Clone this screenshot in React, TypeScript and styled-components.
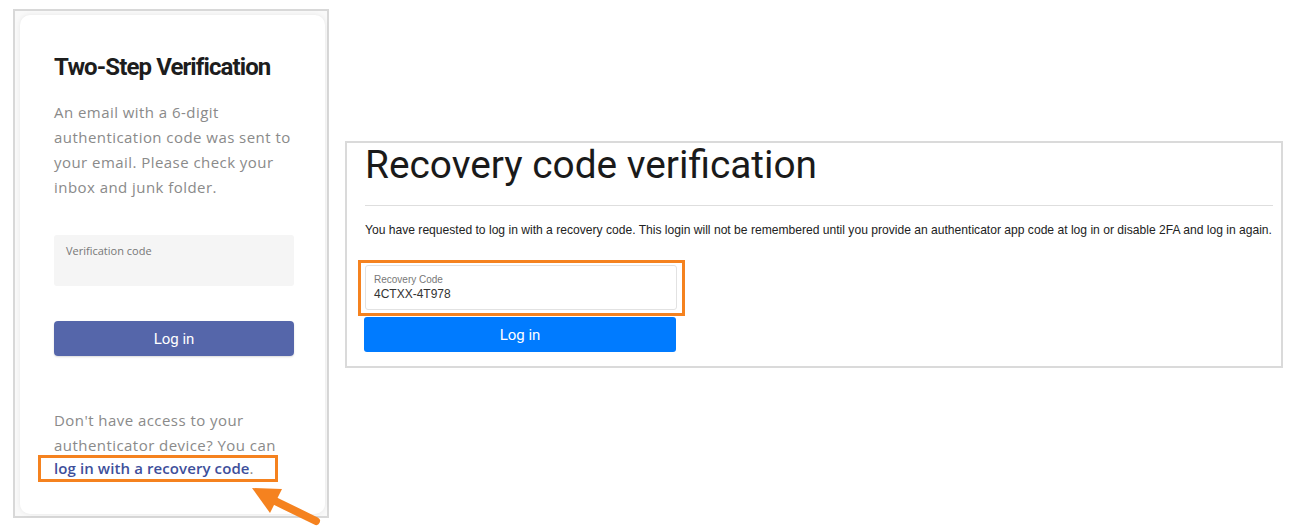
import styled, { createGlobalStyle } from "styled-components";

const GlobalStyle = createGlobalStyle`
  html, body {
    margin: 0;
    padding: 0;
    background: #ffffff;
  }
  body {
    width: 1294px;
    height: 527px;
    overflow: hidden;
  }
`;

const Page = styled.div`
  position: relative;
  display: flex;
  align-items: flex-start;
  width: 1294px;
  height: 527px;
  padding: 9px 0 0 13px;
  box-sizing: border-box;
`;

const Frame = styled.div`
  display: flex;
  width: 316px;
  height: 509px;
  box-sizing: border-box;
  border: 2px solid #d8d8d8;
  background: #f9f9f9;
  padding: 4px 2px 2px 5px;
`;

const Card = styled.div`
  flex: 1;
  background: #ffffff;
  border-radius: 10px;
  box-shadow: 0 0 5px rgba(0, 0, 0, 0.08);
  padding: 36px 28px 0 34px;
  box-sizing: border-box;
`;

const CardTitle = styled.h1`
  margin: 0;
  font-family: "Roboto", "Liberation Sans", sans-serif;
  font-weight: 700;
  font-size: 24px;
  line-height: 32px;
  letter-spacing: -0.9px;
  color: #1d1d1d;
`;

const CardText = styled.p<{ $top: number }>`
  margin: ${({ $top }) => $top}px 0 0;
  font-family: "Open Sans", "Liberation Sans", sans-serif;
  font-size: 15px;
  letter-spacing: 0.45px;
  line-height: 25px;
  color: #8a8a8a;
`;

const CodeField = styled.div`
  margin-top: 35px;
  width: 240px;
  height: 51px;
  background: #f5f5f5;
  border-radius: 3px;
  padding: 8px 12px;
  box-sizing: border-box;
  font-family: "Open Sans", "Liberation Sans", sans-serif;
  font-size: 11px;
  color: #777777;
`;

const PrimaryButton = styled.button<{ $bg: string; $radius: number }>`
  display: block;
  width: 100%;
  height: 35px;
  border: none;
  border-radius: ${({ $radius }) => $radius}px;
  background: ${({ $bg }) => $bg};
  color: #ffffff;
  font-family: "Roboto", "Liberation Sans", sans-serif;
  font-size: 15px;
  padding: 0;
`;

const LeftButtonWrap = styled.div`
  margin-top: 35px;
  width: 240px;
  border-radius: 4px;
  box-shadow: 0 1px 2px rgba(0, 0, 0, 0.15);
`;

const Highlight = styled.div`
  width: 240px;
  height: 27px;
  box-sizing: border-box;
  margin: -3px 0 0 -16px;
  border: 3px solid #f5821f;
  padding-left: 13px;
  font-family: "Open Sans", "Liberation Sans", sans-serif;
  font-size: 15px;
  letter-spacing: 0.45px;
  line-height: 21px;
  color: #8a8a8a;
  white-space: nowrap;
`;

const RecoveryLink = styled.a`
  color: #3e4f9b;
  font-weight: 600;
  letter-spacing: 0.1px;
  text-decoration: none;
`;

const Panel = styled.div`
  margin: 132px 0 0 16px;
  width: 938px;
  height: 227px;
  box-sizing: border-box;
  border: 2px solid #dadada;
  padding: 0 8px 0 18px;
  font-family: "Liberation Sans", Arial, sans-serif;
`;

const PanelTitle = styled.h2`
  margin: 0;
  font-family: "Roboto", "Liberation Sans", sans-serif;
  font-weight: 400;
  font-size: 38.8px;
  line-height: 44px;
  color: #1a1a1a;
`;

const Rule = styled.hr`
  margin: 18px 0 0;
  border: none;
  border-top: 1px solid #dedede;
`;

const PanelText = styled.p`
  margin: 16px 0 0;
  font-size: 12.1px;
  line-height: 16px;
  color: #222222;
  white-space: nowrap;
`;

const FieldHighlight = styled.div`
  margin: 22px 0 0 -7px;
  width: 327px;
  box-sizing: border-box;
  border: 3px solid #f5821f;
  padding: 2px 5px 3px 4px;
`;

const RecoveryField = styled.div`
  height: 45px;
  box-sizing: border-box;
  border: 1px solid #e2e2e2;
  border-radius: 3px;
  padding: 7px 8px 0;
`;

const FieldLabel = styled.div`
  font-size: 10px;
  line-height: 13px;
  color: #777777;
`;

const FieldValue = styled.div`
  font-size: 12px;
  line-height: 16px;
  color: #333333;
`;

const RightButtonWrap = styled.div`
  margin: 1px 0 0 -1px;
  width: 312px;
`;

const Arrow = styled.svg`
  position: absolute;
  left: 245px;
  top: 480px;
`;

export default function App() {
  return (
    <>
      <GlobalStyle />
      <Page>
        <Frame>
          <Card>
            <CardTitle>Two-Step Verification</CardTitle>
            <CardText $top={17}>
              An email with a 6-digit authentication code was sent to your
              email. Please check your inbox and junk folder.
            </CardText>
            <CodeField>Verification code</CodeField>
            <LeftButtonWrap>
              <PrimaryButton $bg="#5566aa" $radius={4}>
                Log in
              </PrimaryButton>
            </LeftButtonWrap>
            <CardText $top={52}>
              Don't have access to your authenticator device? You can
            </CardText>
            <Highlight>
              <RecoveryLink href="#">log in with a recovery code</RecoveryLink>.
            </Highlight>
          </Card>
        </Frame>
        <Panel>
          <PanelTitle>Recovery code verification</PanelTitle>
          <Rule />
          <PanelText>
            You have requested to log in with a recovery code. This login will
            not be remembered until you provide an authenticator app code at
            log in or disable 2FA and log in again.
          </PanelText>
          <FieldHighlight>
            <RecoveryField>
              <FieldLabel>Recovery Code</FieldLabel>
              <FieldValue>4CTXX-4T978</FieldValue>
            </RecoveryField>
          </FieldHighlight>
          <RightButtonWrap>
            <PrimaryButton $bg="#007bff" $radius={3}>
              Log in
            </PrimaryButton>
          </RightButtonWrap>
        </Panel>
        <Arrow width="80" height="47" viewBox="0 0 80 47">
          <line
            x1="28"
            y1="20"
            x2="71"
            y2="41"
            stroke="#f5821f"
            strokeWidth="8"
            strokeLinecap="round"
          />
          <polygon points="7,8 37,9 25,33" fill="#f5821f" />
        </Arrow>
      </Page>
    </>
  );
}
